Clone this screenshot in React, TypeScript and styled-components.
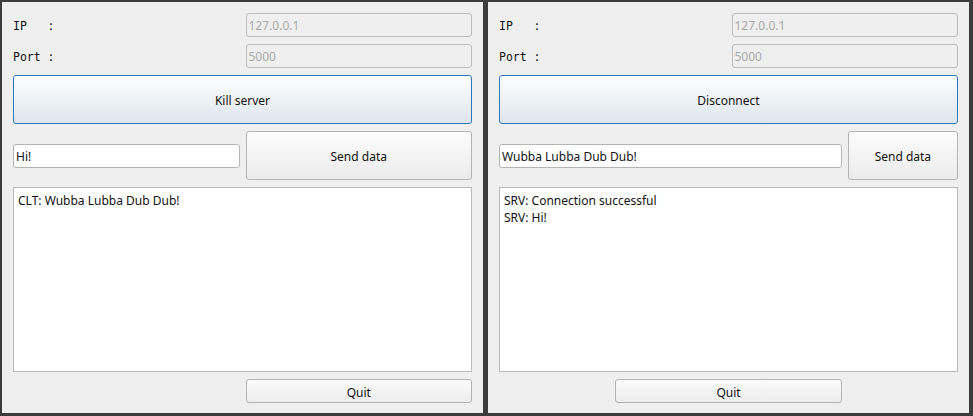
import React from 'react';
import styled, { createGlobalStyle } from 'styled-components';

const Global = createGlobalStyle`
  html, body { margin: 0; padding: 0; background: #3c3c3c; }
  body { width: 973px; height: 416px; overflow: hidden; }
`;

const Desktop = styled.div`
  display: flex;
  gap: 5px;
  padding: 2px 0 3px 2px;
  height: 416px;
  box-sizing: border-box;
  background: #3c3c3c;
`;

const Window = styled.div`
  flex: none;
  width: 481px;
  height: 411px;
  box-sizing: border-box;
  background: #efefef;
  padding: 11px 11px 10px;
  display: grid;
  grid-template-columns: repeat(4, 1fr);
  grid-template-rows: 24px 24px 49px 49px 1fr 24px;
  column-gap: 6px;
  row-gap: 7px;
  font-family: "Noto Sans", "Open Sans", sans-serif;
  font-size: 12px;
  color: #111;
`;

const EdgeStrip = styled.div`
  flex: 1;
  margin-left: 2px;
  background: #d9d9d9;
`;

const Label = styled.div`
  grid-column: 1 / 3;
  align-self: center;
  padding-top: 2px;
  font-family: "DejaVu Sans Mono", "Liberation Mono", monospace;
  font-size: 11.5px;
  white-space: pre;
  color: #111;
`;

const Field = styled.input<{ $col: string }>`
  grid-column: ${p => p.$col};
  align-self: center;
  height: 24px;
  box-sizing: border-box;
  margin: 0;
  padding: 1px 2px 0;
  border: 1px solid #b5b5b5;
  border-radius: 3px;
  background: #fff;
  font-family: "Noto Sans", "Open Sans", sans-serif;
  font-size: 12px;
  color: #111;
  outline: none;
  &:disabled {
    background: #efefef;
    border-color: #bdbdbd;
    color: #a9a9a9;
  }
`;

const Button = styled.button<{ $col: string; $primary?: boolean }>`
  grid-column: ${p => p.$col};
  margin: 0;
  padding: 2px 0 0;
  box-sizing: border-box;
  border-radius: 3px;
  border: 1px solid ${p => (p.$primary ? '#2d78ba' : '#b3b3b3')};
  background: ${p =>
    p.$primary
      ? 'linear-gradient(to bottom, #fdfeff 0%, #eef2f6 50%, #dde5ed 100%)'
      : 'linear-gradient(to bottom, #fbfbfb 0%, #f2f2f2 60%, #ececec 100%)'};
  font-family: "Noto Sans", "Open Sans", sans-serif;
  font-size: 12px;
  color: #111;
`;

const Log = styled.div`
  grid-column: 1 / 5;
  background: #fff;
  border: 1px solid #b9b9b9;
  padding: 4px 4px;
  line-height: 17px;
  box-sizing: border-box;
  overflow: hidden;
`;

const Line = styled.div`
  white-space: pre;
`;

type Props = {
  action: string;
  message: string;
  msgCol: string;
  sendCol: string;
  quitCol: string;
  lines: string[];
};

function Peer({ action, message, msgCol, sendCol, quitCol, lines }: Props) {
  return (
    <Window>
      <Label>{'IP   :'}</Label>
      <Field $col="3 / 5" disabled defaultValue="127.0.0.1" />
      <Label>{'Port :'}</Label>
      <Field $col="3 / 5" disabled defaultValue="5000" />
      <Button $col="1 / 5" $primary>{action}</Button>
      <Field $col={msgCol} defaultValue={message} />
      <Button $col={sendCol}>Send data</Button>
      <Log>
        {lines.map((l, i) => (
          <Line key={i}>{l}</Line>
        ))}
      </Log>
      <Button $col={quitCol}>Quit</Button>
    </Window>
  );
}

export default function App() {
  return (
    <>
      <Global />
      <Desktop>
        <Peer
          action="Kill server"
          message="Hi!"
          msgCol="1 / 3"
          sendCol="3 / 5"
          quitCol="3 / 5"
          lines={['CLT: Wubba Lubba Dub Dub!']}
        />
        <Peer
          action="Disconnect"
          message="Wubba Lubba Dub Dub!"
          msgCol="1 / 4"
          sendCol="4 / 5"
          quitCol="2 / 4"
          lines={['SRV: Connection successful', 'SRV: Hi!']}
        />
        <EdgeStrip />
      </Desktop>
    </>
  );
}
